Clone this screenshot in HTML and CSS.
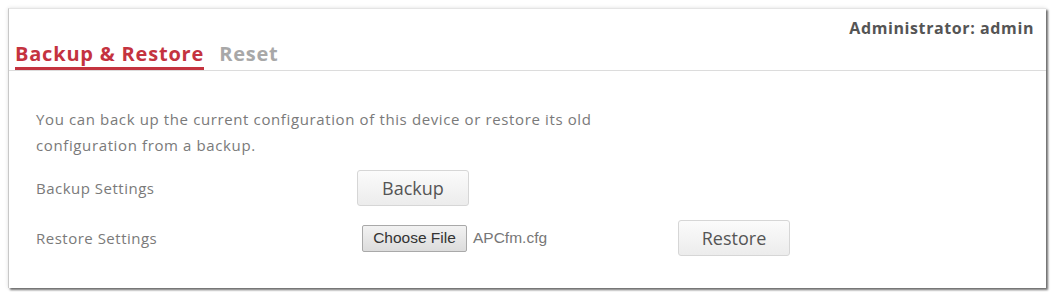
FILE: index.html
```html
<!DOCTYPE html>
<html lang="en">
<head>
    <meta charset="UTF-8">
    <title>Backup &amp; Restore</title>
    <link rel="stylesheet" href="styles.css">
</head>
<body>
    <div class="panel">
        <div class="panel-head">
            <div class="tabs">
                <span class="tab active">Backup &amp; Restore</span>
                <span class="tab">Reset</span>
            </div>
            <div class="user">Administrator: admin</div>
        </div>
        <div class="panel-body">
            <p class="intro">You can back up the current configuration of this device or restore its old configuration from a backup.</p>
            <div class="row">
                <div class="label">Backup Settings</div>
                <button class="btn">Backup</button>
            </div>
            <div class="row">
                <div class="label">Restore Settings</div>
                <div class="file">
                    <span class="file-btn">Choose File</span>
                    <span class="file-name">APCfm.cfg</span>
                </div>
                <button class="btn">Restore</button>
            </div>
        </div>
    </div>
</body>
</html>
```

FILE: styles.css
```css
* {
    margin: 0;
    padding: 0;
    box-sizing: border-box;
}

body {
    font-family: 'Open Sans', sans-serif;
    background-color: #ffffff;
    padding: 8px 5px 4px 8px;
}

.panel {
    height: 280px;
    background: #ffffff;
    border-left: 1px solid #c8c8c8;
    border-top: 1px solid #e4e4e4;
    box-shadow: 2px 2px 2px rgba(0, 0, 0, 0.55), 0 0 4px rgba(0, 0, 0, 0.12);
}

.panel-head {
    display: flex;
    justify-content: space-between;
    border-bottom: 1px solid #dcdcdc;
    height: 62px;
}

.tabs {
    display: flex;
    align-items: flex-end;
    gap: 15px;
    padding-left: 6px;
}

.tab {
    font-size: 20px;
    line-height: 20px;
    font-weight: bold;
    letter-spacing: 0.8px;
    color: #a8a8a8;
    padding-bottom: 3px;
    border-bottom: 3px solid transparent;
}

.tab.active {
    color: #c4333f;
    border-bottom-color: #c4333f;
}

.user {
    font-size: 16px;
    line-height: 20px;
    font-weight: bold;
    letter-spacing: 0.6px;
    color: #555555;
    padding: 9px 12px 0 0;
}

.panel-body {
    padding: 35px 27px 0;
    color: #7a7a7a;
    font-size: 15px;
    letter-spacing: 0.5px;
}

.intro {
    width: 620px;
    line-height: 26px;
    letter-spacing: 0.62px;
    margin-bottom: 5px;
}

.row {
    display: flex;
    align-items: center;
    height: 50px;
}

.label {
    width: 321px;
}

.btn {
    font-family: 'Open Sans', sans-serif;
    font-size: 18px;
    color: #555555;
    background: linear-gradient(#fbfbfb, #ececec);
    border: 1px solid #d6d6d6;
    border-radius: 3px;
    width: 112px;
    height: 36px;
}

.file {
    display: flex;
    align-items: center;
    width: 316px;
    margin-left: 5px;
    letter-spacing: 0;
}

.file-btn {
    font-family: 'Liberation Sans', sans-serif;
    font-size: 15.5px;
    color: #333333;
    background: linear-gradient(#f2f2f2, #dcdcdc);
    border: 1px solid #a9a9a9;
    border-radius: 2px;
    width: 105px;
    height: 27px;
    display: flex;
    align-items: center;
    justify-content: center;
}

.file-name {
    font-family: 'Liberation Sans', sans-serif;
    font-size: 15.5px;
    color: #777777;
    margin-left: 6px;
}
```
